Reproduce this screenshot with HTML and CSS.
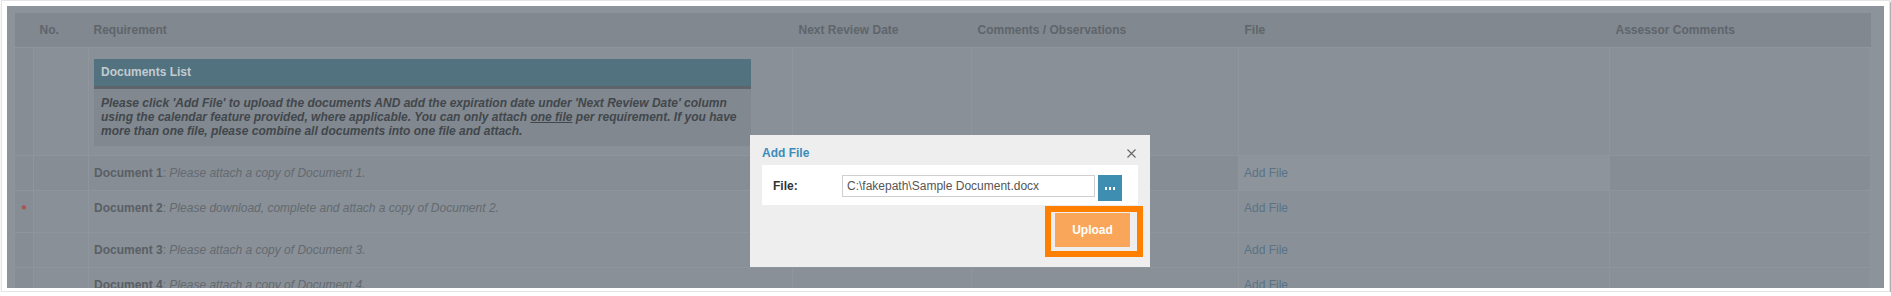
FILE: index.html
```html
<!DOCTYPE html>
<html lang="en">
<head>
    <meta charset="UTF-8">
    <title>Requirements - Add File</title>
    <link rel="stylesheet" href="styles.css">
</head>
<body>
    <div class="frame">
        <div class="screen">
            <table class="req-table">
                <colgroup>
                    <col class="c-flag">
                    <col class="c-no">
                    <col class="c-req">
                    <col class="c-date">
                    <col class="c-comm">
                    <col class="c-file">
                    <col class="c-asses">
                </colgroup>
                <thead>
                    <tr>
                        <th></th>
                        <th>No.</th>
                        <th>Requirement</th>
                        <th>Next Review Date</th>
                        <th>Comments / Observations</th>
                        <th>File</th>
                        <th>Assessor Comments</th>
                    </tr>
                </thead>
                <tbody>
                    <tr class="row-list">
                        <td class="flag"></td>
                        <td></td>
                        <td class="list-cell">
                            <div class="doc-list">
                                <div class="doc-list-title">Documents List</div>
                                <p class="doc-list-note">Please click 'Add File' to upload the documents AND add the expiration date under 'Next Review Date' column<br>using the calendar feature provided, where applicable. You can only attach <u>one file</u> per requirement. If you have<br>more than one file, please combine all documents into one file and attach.</p>
                            </div>
                        </td>
                        <td></td>
                        <td></td>
                        <td></td>
                        <td></td>
                    </tr>
                    <tr class="row-doc row-hover">
                        <td class="flag"></td>
                        <td></td>
                        <td><b>Document 1</b>: <i>Please attach a copy of Document 1.</i></td>
                        <td></td>
                        <td></td>
                        <td class="file-cell"><a>Add File</a></td>
                        <td></td>
                    </tr>
                    <tr class="row-doc row-tall">
                        <td class="flag star-cell"><span class="star">*</span></td>
                        <td></td>
                        <td><b>Document 2</b>: <i>Please download, complete and attach a copy of Document 2.</i></td>
                        <td></td>
                        <td></td>
                        <td><a>Add File</a></td>
                        <td></td>
                    </tr>
                    <tr class="row-doc">
                        <td class="flag"></td>
                        <td></td>
                        <td><b>Document 3</b>: <i>Please attach a copy of Document 3.</i></td>
                        <td></td>
                        <td></td>
                        <td><a>Add File</a></td>
                        <td></td>
                    </tr>
                    <tr class="row-doc">
                        <td class="flag"></td>
                        <td></td>
                        <td><b>Document 4</b>: <i>Please attach a copy of Document 4.</i></td>
                        <td></td>
                        <td></td>
                        <td><a>Add File</a></td>
                        <td></td>
                    </tr>
                </tbody>
            </table>

            <div class="modal">
                <div class="modal-head">
                    <span class="modal-title">Add File</span>
                    <svg class="modal-close" width="9" height="9" viewBox="0 0 9 9"><path d="M0.5 0.5 L8.5 8.5 M8.5 0.5 L0.5 8.5" stroke="#666" stroke-width="1.1" fill="none"/></svg>
                </div>
                <div class="modal-body">
                    <label class="file-label">File:</label>
                    <div class="file-input">C:\fakepath\Sample Document.docx</div>
                    <button class="browse-btn" type="button">
                        <svg width="10" height="3" viewBox="0 0 10 3"><rect x="0" y="0" width="2" height="3" fill="#fff"/><rect x="4" y="0" width="2" height="3" fill="#fff"/><rect x="8" y="0" width="2" height="3" fill="#fff"/></svg>
                    </button>
                </div>
                <div class="modal-foot">
                    <span class="highlight">
                        <button class="upload-btn" type="button">Upload</button>
                    </span>
                </div>
            </div>
        </div>
    </div>
</body>
</html>
```

FILE: styles.css
```css
body { margin: 0; background: #fff; font-family: "Liberation Sans", Arial, sans-serif; }
.frame { margin: 0 1px; padding: 5px 5px 3px 5px; border: 1px solid #e4e4e4; box-shadow: 1px 2px 2px rgba(0,0,0,0.45); }
.screen { position: relative; height: 282px; overflow: hidden; background: #8c939a; padding: 7px 0 0 7px; box-sizing: border-box; }

.req-table { width: 1856px; table-layout: fixed; border-collapse: collapse; font-size: 12px; }
.c-flag { width: 19px; }
.c-no { width: 55px; }
.c-req { width: 704px; }
.c-date { width: 179px; }
.c-comm { width: 267px; }
.c-file { width: 371px; }
.c-asses { width: 261px; }

.req-table th { height: 34px; padding: 0 6px; background: #81888f; color: #5f656b; font-weight: bold; text-align: left; vertical-align: middle; }
.req-table th:nth-child(3) { padding-left: 5px; }
.req-table td { background: #899097; border: 1px solid #8e959c; padding: 10px 5px 0; vertical-align: top; color: #646a70; line-height: 14px; }
.req-table td.flag { background: #868d94; padding: 10px 0 0; text-align: center; }
.req-table td.star-cell { padding-top: 12px; }
.req-table td b { color: #595f65; }
.req-table td a { color: #587387; }
.star { color: #b04c4a; font-size: 13px; font-weight: bold; }

.row-list td { height: 108px; padding: 0; box-sizing: border-box; }
.row-list td.list-cell { padding: 11px 8px 0 5px; }
.row-doc td { height: 35px; box-sizing: border-box; }
.row-doc.row-tall td { height: 42px; }
.row-hover td { background: #868d94; }
.row-hover td.file-cell { background: #8d949b; }

.doc-list { width: 657px; }
.doc-list-title { height: 27px; line-height: 27px; padding: 0 7px; background: #527280; color: #c3cbcf; font-weight: bold; }
.doc-list-note { margin: 0; padding: 7px 7px 8px; border-top: 3px solid #5e6469; background: #81888f; color: #41474c; font-weight: bold; font-style: italic; white-space: nowrap; line-height: 14px; }

.modal { position: absolute; left: 743px; top: 129px; width: 400px; height: 132px; padding: 0 12px; box-sizing: border-box; background: #eeeeee; font-size: 12px; }
.modal-head { height: 30px; display: flex; align-items: center; justify-content: space-between; }
.modal-title { color: #3c8cbb; font-weight: bold; margin-top: 5px; }
.modal-close { margin-right: 2px; margin-top: 6px; }
.modal-body { height: 40px; background: #fff; display: flex; align-items: flex-start; padding: 10px 16px 0 11px; box-sizing: border-box; }
.file-label { width: 69px; color: #333; font-weight: bold; line-height: 22px; }
.file-input { width: 253px; height: 22px; box-sizing: border-box; border: 1px solid #cfcfcf; padding: 0 4px; line-height: 20px; color: #555; }
.browse-btn { margin-left: 3px; width: 24px; height: 26px; border: none; padding: 0; background: #3d8eb0; display: flex; align-items: center; justify-content: center; }
.modal-foot { display: flex; justify-content: flex-end; margin: 1px -5px 0 0; }
.highlight { display: block; border: 6px solid #ff8000; padding: 1px 7px 4px 4px; }
.upload-btn { display: block; width: 75px; height: 34px; border: none; background: #f9a65a; color: #fff; font-family: "Liberation Sans", Arial, sans-serif; font-size: 12px; font-weight: bold; }
```
